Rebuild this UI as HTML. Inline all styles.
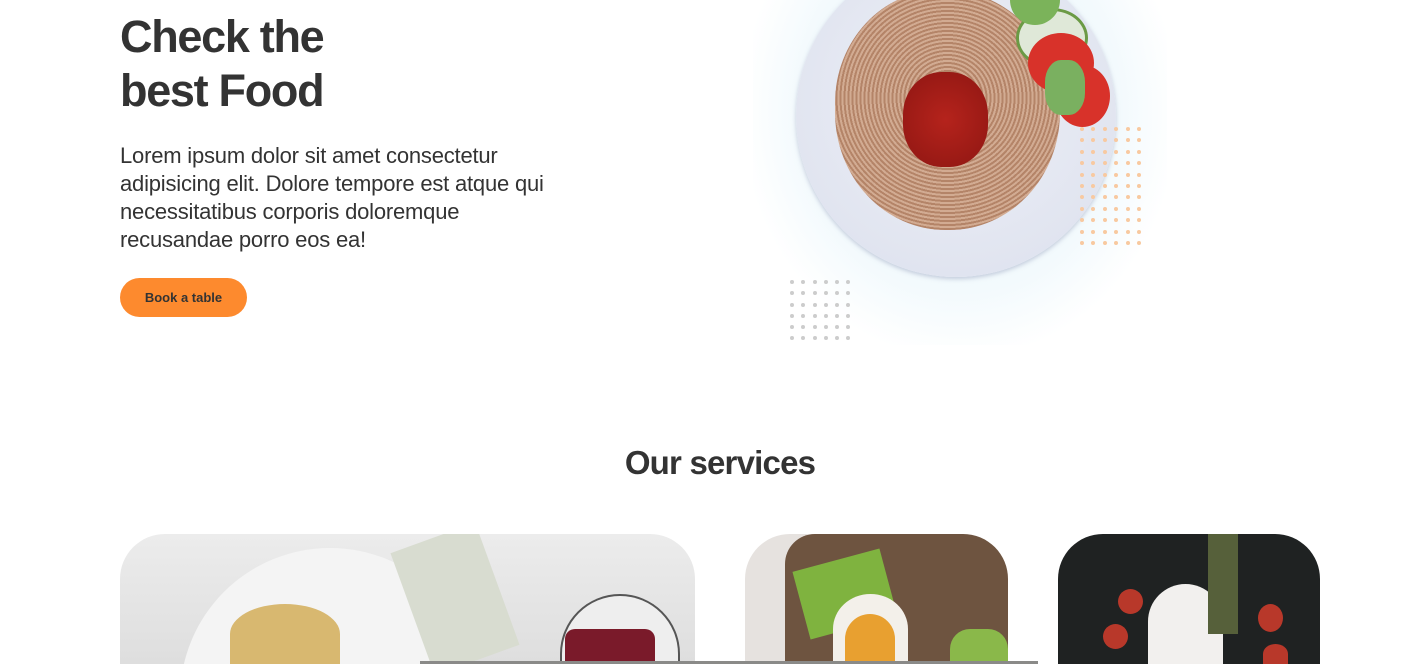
<!DOCTYPE html>
<html><head><style>
*{margin:0;padding:0;box-sizing:border-box}
html,body{width:1417px;height:664px;overflow:hidden}
body{background:#fff;font-family:"Liberation Sans",Roboto,sans-serif;color:#333;position:relative}
h1{position:absolute;left:120px;top:10px;font-size:45px;line-height:54px;font-weight:700;color:#333;letter-spacing:-1.3px}
p.lead{position:absolute;left:120px;top:142px;width:450px;font-size:22px;line-height:28px;color:#333;letter-spacing:-0.2px}
.btn{position:absolute;left:120px;top:278px;width:127px;height:39px;border-radius:20px;background:#fd8a2e;font-size:13px;font-weight:700;color:#333;text-align:center;line-height:39px}
.glow{position:absolute;left:753px;top:0;width:414px;height:345px;background:radial-gradient(ellipse at 50% 32%,#e9f6fb 0%,#f3fafd 55%,#fff 75%)}
.plate{position:absolute;left:796px;top:-45px;width:320px;height:322px;border-radius:50%;background:radial-gradient(circle at 50% 45%,#eef0f7 0%,#dfe3ef 80%,#c9cfe0 100%);box-shadow:0 2px 4px rgba(150,160,190,.5)}
.pasta{position:absolute;left:835px;top:-10px;width:225px;height:240px;border-radius:48% 52% 50% 50%;background:repeating-radial-gradient(circle at 50% 45%,#d2ab92 0 2px,#b48468 2px 4px)}
.sauce{position:absolute;left:903px;top:72px;width:85px;height:95px;border-radius:45%;background:radial-gradient(circle,#b5231c,#8e1612)}
.tom{position:absolute;border-radius:50%;background:#d8322a}
.dots{position:absolute;display:grid;gap:0}
.dots i{display:block;width:4px;height:4px;border-radius:50%}
h2{position:absolute;left:35px;width:1370px;top:444px;text-align:center;font-size:33px;font-weight:700;color:#333;letter-spacing:-0.8px}
.wrap{position:absolute;left:0;top:0;width:1417px;height:664px;overflow:hidden}
.card{position:absolute;top:534px;height:130px;border-radius:45px 45px 0 0;overflow:hidden}
.bar{position:absolute;left:420px;top:661px;width:618px;height:3px;background:#8a8a88}
</style></head><body><div class="wrap">
<h1>Check the<br>best Food</h1>
<p class="lead">Lorem ipsum dolor sit amet consectetur adipisicing elit. Dolore tempore est atque qui necessitatibus corporis doloremque recusandae porro eos ea!</p>
<div class="btn">Book a table</div>
<div class="glow"></div>
<div class="plate"></div>
<div class="pasta"></div>
<div class="sauce"></div>
<div class="tom" style="left:1016px;top:8px;width:72px;height:60px;background:#dfe8d8;border:3px solid #6b9a45"></div>
<div class="tom" style="left:1028px;top:33px;width:66px;height:60px"></div>
<div class="tom" style="left:1055px;top:65px;width:55px;height:62px"></div>
<div style="position:absolute;left:1010px;top:0;width:50px;height:25px;background:#7bb35a;border-radius:0 0 30px 30px"></div>
<div style="position:absolute;left:1045px;top:60px;width:40px;height:55px;background:#7ab060;border-radius:40%"></div>
<div class="dots" style="left:1080px;top:127px;grid-template-columns:repeat(6,11.4px);grid-auto-rows:11.4px">
<i style="background:#f8c9a0"></i><i style="background:#f8c9a0"></i><i style="background:#f8c9a0"></i><i style="background:#f8c9a0"></i><i style="background:#f8c9a0"></i><i style="background:#f8c9a0"></i>
<i style="background:#f8c9a0"></i><i style="background:#f8c9a0"></i><i style="background:#f8c9a0"></i><i style="background:#f8c9a0"></i><i style="background:#f8c9a0"></i><i style="background:#f8c9a0"></i>
<i style="background:#f8c9a0"></i><i style="background:#f8c9a0"></i><i style="background:#f8c9a0"></i><i style="background:#f8c9a0"></i><i style="background:#f8c9a0"></i><i style="background:#f8c9a0"></i>
<i style="background:#f8c9a0"></i><i style="background:#f8c9a0"></i><i style="background:#f8c9a0"></i><i style="background:#f8c9a0"></i><i style="background:#f8c9a0"></i><i style="background:#f8c9a0"></i>
<i style="background:#f8c9a0"></i><i style="background:#f8c9a0"></i><i style="background:#f8c9a0"></i><i style="background:#f8c9a0"></i><i style="background:#f8c9a0"></i><i style="background:#f8c9a0"></i>
<i style="background:#f8c9a0"></i><i style="background:#f8c9a0"></i><i style="background:#f8c9a0"></i><i style="background:#f8c9a0"></i><i style="background:#f8c9a0"></i><i style="background:#f8c9a0"></i>
<i style="background:#f8c9a0"></i><i style="background:#f8c9a0"></i><i style="background:#f8c9a0"></i><i style="background:#f8c9a0"></i><i style="background:#f8c9a0"></i><i style="background:#f8c9a0"></i>
<i style="background:#f8c9a0"></i><i style="background:#f8c9a0"></i><i style="background:#f8c9a0"></i><i style="background:#f8c9a0"></i><i style="background:#f8c9a0"></i><i style="background:#f8c9a0"></i>
<i style="background:#f8c9a0"></i><i style="background:#f8c9a0"></i><i style="background:#f8c9a0"></i><i style="background:#f8c9a0"></i><i style="background:#f8c9a0"></i><i style="background:#f8c9a0"></i>
<i style="background:#f8c9a0"></i><i style="background:#f8c9a0"></i><i style="background:#f8c9a0"></i><i style="background:#f8c9a0"></i><i style="background:#f8c9a0"></i><i style="background:#f8c9a0"></i>
<i style="background:#f8c9a0"></i><i style="background:#f8c9a0"></i><i style="background:#f8c9a0"></i><i style="background:#f8c9a0"></i><i style="background:#f8c9a0"></i><i style="background:#f8c9a0"></i>
</div>
<div class="dots" style="left:790px;top:280px;grid-template-columns:repeat(6,11.3px);grid-auto-rows:11.3px">
<i style="background:#ccc"></i><i style="background:#ccc"></i><i style="background:#ccc"></i><i style="background:#ccc"></i><i style="background:#ccc"></i><i style="background:#ccc"></i>
<i style="background:#ccc"></i><i style="background:#ccc"></i><i style="background:#ccc"></i><i style="background:#ccc"></i><i style="background:#ccc"></i><i style="background:#ccc"></i>
<i style="background:#ccc"></i><i style="background:#ccc"></i><i style="background:#ccc"></i><i style="background:#ccc"></i><i style="background:#ccc"></i><i style="background:#ccc"></i>
<i style="background:#ccc"></i><i style="background:#ccc"></i><i style="background:#ccc"></i><i style="background:#ccc"></i><i style="background:#ccc"></i><i style="background:#ccc"></i>
<i style="background:#ccc"></i><i style="background:#ccc"></i><i style="background:#ccc"></i><i style="background:#ccc"></i><i style="background:#ccc"></i><i style="background:#ccc"></i>
<i style="background:#ccc"></i><i style="background:#ccc"></i><i style="background:#ccc"></i><i style="background:#ccc"></i><i style="background:#ccc"></i><i style="background:#ccc"></i>
</div>
<h2>Our services</h2>
<div class="card" style="left:120px;width:575px;background:linear-gradient(180deg,#ececec,#dedede)">
  <div style="position:absolute;left:60px;top:14px;width:300px;height:300px;border-radius:50%;background:#f4f4f4"></div>
  <div style="position:absolute;left:290px;top:0;width:90px;height:130px;background:#d8dcd0;transform:rotate(-20deg)"></div>
  <div style="position:absolute;left:110px;top:70px;width:110px;height:60px;border-radius:50% 50% 0 0;background:#d8b870"></div>
  <div style="position:absolute;left:440px;top:60px;width:120px;height:70px;border-radius:60px 60px 0 0;border:2px solid #555;border-bottom:0;background:#eee"></div>
  <div style="position:absolute;left:445px;top:95px;width:90px;height:35px;background:#7a1a2a;border-radius:10px 10px 0 0"></div>
</div>
<div class="card" style="left:745px;width:263px;background:#e6e2df">
  <div style="position:absolute;left:40px;top:0;width:223px;height:130px;background:#6e5440;border-radius:30px 0 0 0"></div>
  <div style="position:absolute;left:55px;top:25px;width:90px;height:70px;background:#7fb33f;transform:rotate(-15deg)"></div>
  <div style="position:absolute;left:88px;top:60px;width:75px;height:70px;border-radius:50% 50% 0 0;background:#f3f0ea"></div>
  <div style="position:absolute;left:100px;top:80px;width:50px;height:50px;border-radius:50% 50% 0 0;background:#e8a030"></div>
  <div style="position:absolute;left:205px;top:95px;width:58px;height:35px;border-radius:20px 20px 0 0;background:#8ab84a"></div>
</div>
<div class="card" style="left:1058px;width:262px;background:#1f2222">
  <div style="position:absolute;left:90px;top:50px;width:75px;height:80px;border-radius:40px 40px 0 0;background:#f2f0ee"></div>
  <div style="position:absolute;left:60px;top:55px;width:25px;height:25px;border-radius:50%;background:#b8382a"></div>
  <div style="position:absolute;left:45px;top:90px;width:25px;height:25px;border-radius:50%;background:#b8382a"></div>
  <div style="position:absolute;left:200px;top:70px;width:25px;height:28px;border-radius:50%;background:#b8382a"></div>
  <div style="position:absolute;left:205px;top:110px;width:25px;height:20px;border-radius:50% 50% 0 0;background:#b8382a"></div>
  <div style="position:absolute;left:150px;top:0;width:30px;height:100px;background:#56603a"></div>
</div>
<div class="bar"></div>
</div></body></html>
